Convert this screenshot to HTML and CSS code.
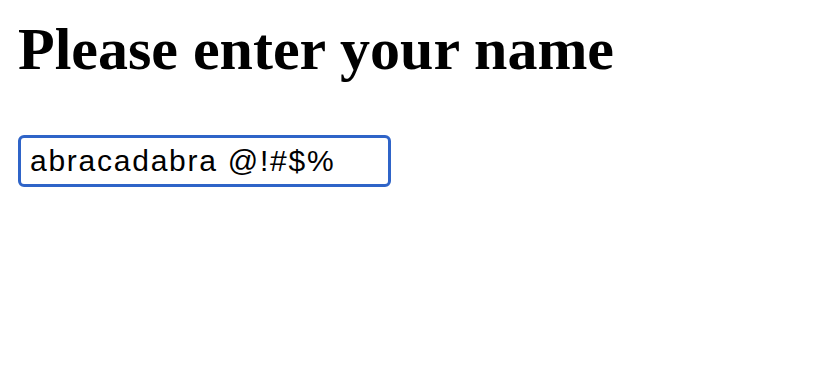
FILE: index.html
```html
<!DOCTYPE html>
<html>
<head>
<meta charset="utf-8">
<link rel="stylesheet" href="styles.css">
</head>
<body>
<div class="page">
  <h1 class="title">Please enter your name</h1>
  <div class="field">abracadabra @!#$%</div>
</div>
</body>
</html>
```
FILE: styles.css
```css
html, body {
  margin: 0;
  padding: 0;
  background: #ffffff;
}
.page {
  padding: 16px 18px 0 18px;
}
.title {
  font-family: "Liberation Serif", "Times New Roman", serif;
  font-weight: bold;
  font-size: 60px;
  line-height: 66px;
  margin: 0;
  color: #000;
}
.field {
  margin-top: 53px;
  box-sizing: border-box;
  width: 373px;
  height: 52px;
  border: 3px solid #2f64c8;
  border-radius: 6px;
  padding: 0 0 0 9px;
  font-family: "Liberation Sans", Arial, sans-serif;
  font-size: 30px;
  letter-spacing: 1.75px;
  line-height: 46px;
  color: #000;
}
```
